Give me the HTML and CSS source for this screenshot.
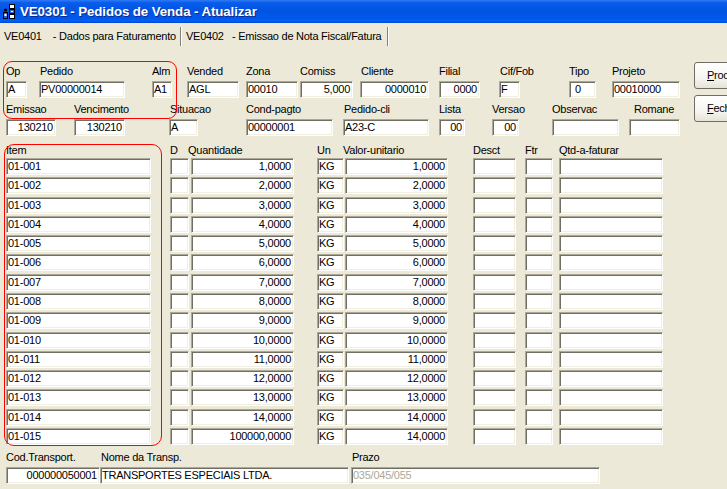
FILE: index.html
```html
<!DOCTYPE html>
<html lang="pt">
<head>
<meta charset="utf-8">
<title>VE0301 - Pedidos de Venda - Atualizar</title>
<link rel="stylesheet" href="styles.css">
</head>
<body>
<div class="window">
  <div class="titlebar">
    <svg class="appicon" width="16" height="16" viewBox="0 0 16 16">
      <circle cx="3.5" cy="6" r="1.6" fill="#000"/>
      <rect x="1.5" y="8.5" width="4" height="6" fill="#2a62e0" stroke="#000" stroke-width="1"/>
      <rect x="2.5" y="10" width="2" height="2" fill="#fff"/>
      <rect x="7.5" y="0.5" width="5" height="4" fill="#fff" stroke="#000" stroke-width="1"/>
      <rect x="7.5" y="5.5" width="5" height="4" fill="#2a62e0" stroke="#000" stroke-width="1"/>
      <rect x="7.5" y="10.5" width="5" height="4" fill="#fff" stroke="#000" stroke-width="1"/>
      <rect x="9" y="7" width="2" height="1" fill="#fff"/>
    </svg>
    <span class="title">VE0301 - Pedidos de Venda - Atualizar</span>
  </div>

  <div class="tabs">
    <div class="tab tab1">VE0401    - Dados para Faturamento</div>
    <div class="tab tab2">VE0402   - Emissao de Nota Fiscal/Fatura</div>
  </div>

  <div class="form">
    <div class="top">
      <div class="top-fields">
        <div class="row">
          <div class="field f-op"><span class="lbl">Op</span><div class="input">A</div></div>
          <div class="field f-pedido"><span class="lbl pl1">Pedido</span><div class="input">PV00000014</div></div>
          <div class="field f-alm"><span class="lbl">Alm</span><div class="input">A1</div></div>
          <div class="field f-vended"><span class="lbl">Vended</span><div class="input">AGL</div></div>
          <div class="field f-zona"><span class="lbl">Zona</span><div class="input">00010</div></div>
          <div class="field f-comiss"><span class="lbl">Comiss</span><div class="input r">5,000</div></div>
          <div class="field f-cliente"><span class="lbl pl1">Cliente</span><div class="input r">0000010</div></div>
          <div class="field f-filial"><span class="lbl">Filial</span><div class="input r">0000</div></div>
          <div class="field f-cif"><span class="lbl pl1">Cif/Fob</span><div class="input">F</div></div>
          <div class="field f-tipo"><span class="lbl">Tipo</span><div class="input ind">0</div></div>
          <div class="field f-projeto"><span class="lbl">Projeto</span><div class="input">00010000</div></div>
        </div>
        <div class="row row2">
          <div class="field f-emissao"><span class="lbl">Emissao</span><div class="input r">130210</div></div>
          <div class="field f-venc"><span class="lbl">Vencimento</span><div class="input r">130210</div></div>
          <div class="field f-sit"><span class="lbl pl1">Situacao</span><div class="input">A</div></div>
          <div class="field f-cond"><span class="lbl">Cond-pagto</span><div class="input">00000001</div></div>
          <div class="field f-pedcli"><span class="lbl pl1">Pedido-cli</span><div class="input">A23-C</div></div>
          <div class="field f-lista"><span class="lbl">Lista</span><div class="input r">00</div></div>
          <div class="field f-versao"><span class="lbl">Versao</span><div class="input r">00</div></div>
          <div class="field f-obs"><span class="lbl">Observac</span><div class="input"></div></div>
          <div class="field f-romane"><span class="lbl pl4">Romane</span><div class="input"></div></div>
        </div>
      </div>
      <div class="buttons">
        <div class="btn"><u>P</u>rocessar</div>
        <div class="btn"><u>F</u>echar</div>
      </div>
    </div>

    <div class="grid">
      <div class="ghead">
        <span class="c-item">Item</span>
        <span class="c-d">D</span>
        <span class="c-qty h-qty">Quantidade</span>
        <span class="c-un">Un</span>
        <span class="c-val h-val">Valor-unitario</span>
        <span class="c-desc">Desct</span>
        <span class="c-ftr">Ftr</span>
        <span class="c-qtd">Qtd-a-faturar</span>
      </div>
      <div class="grows">
        <div class="grow"><div class="input c-item">01-001</div><div class="input c-d"></div><div class="input r c-qty">1,0000</div><div class="input c-un">KG</div><div class="input r c-val">1,0000</div><div class="input c-desc"></div><div class="input c-ftr"></div><div class="input c-qtd"></div></div>
        <div class="grow"><div class="input c-item">01-002</div><div class="input c-d"></div><div class="input r c-qty">2,0000</div><div class="input c-un">KG</div><div class="input r c-val">2,0000</div><div class="input c-desc"></div><div class="input c-ftr"></div><div class="input c-qtd"></div></div>
        <div class="grow"><div class="input c-item">01-003</div><div class="input c-d"></div><div class="input r c-qty">3,0000</div><div class="input c-un">KG</div><div class="input r c-val">3,0000</div><div class="input c-desc"></div><div class="input c-ftr"></div><div class="input c-qtd"></div></div>
        <div class="grow"><div class="input c-item">01-004</div><div class="input c-d"></div><div class="input r c-qty">4,0000</div><div class="input c-un">KG</div><div class="input r c-val">4,0000</div><div class="input c-desc"></div><div class="input c-ftr"></div><div class="input c-qtd"></div></div>
        <div class="grow"><div class="input c-item">01-005</div><div class="input c-d"></div><div class="input r c-qty">5,0000</div><div class="input c-un">KG</div><div class="input r c-val">5,0000</div><div class="input c-desc"></div><div class="input c-ftr"></div><div class="input c-qtd"></div></div>
        <div class="grow"><div class="input c-item">01-006</div><div class="input c-d"></div><div class="input r c-qty">6,0000</div><div class="input c-un">KG</div><div class="input r c-val">6,0000</div><div class="input c-desc"></div><div class="input c-ftr"></div><div class="input c-qtd"></div></div>
        <div class="grow"><div class="input c-item">01-007</div><div class="input c-d"></div><div class="input r c-qty">7,0000</div><div class="input c-un">KG</div><div class="input r c-val">7,0000</div><div class="input c-desc"></div><div class="input c-ftr"></div><div class="input c-qtd"></div></div>
        <div class="grow"><div class="input c-item">01-008</div><div class="input c-d"></div><div class="input r c-qty">8,0000</div><div class="input c-un">KG</div><div class="input r c-val">8,0000</div><div class="input c-desc"></div><div class="input c-ftr"></div><div class="input c-qtd"></div></div>
        <div class="grow"><div class="input c-item">01-009</div><div class="input c-d"></div><div class="input r c-qty">9,0000</div><div class="input c-un">KG</div><div class="input r c-val">9,0000</div><div class="input c-desc"></div><div class="input c-ftr"></div><div class="input c-qtd"></div></div>
        <div class="grow"><div class="input c-item">01-010</div><div class="input c-d"></div><div class="input r c-qty">10,0000</div><div class="input c-un">KG</div><div class="input r c-val">10,0000</div><div class="input c-desc"></div><div class="input c-ftr"></div><div class="input c-qtd"></div></div>
        <div class="grow"><div class="input c-item">01-011</div><div class="input c-d"></div><div class="input r c-qty">11,0000</div><div class="input c-un">KG</div><div class="input r c-val">11,0000</div><div class="input c-desc"></div><div class="input c-ftr"></div><div class="input c-qtd"></div></div>
        <div class="grow"><div class="input c-item">01-012</div><div class="input c-d"></div><div class="input r c-qty">12,0000</div><div class="input c-un">KG</div><div class="input r c-val">12,0000</div><div class="input c-desc"></div><div class="input c-ftr"></div><div class="input c-qtd"></div></div>
        <div class="grow"><div class="input c-item">01-013</div><div class="input c-d"></div><div class="input r c-qty">13,0000</div><div class="input c-un">KG</div><div class="input r c-val">13,0000</div><div class="input c-desc"></div><div class="input c-ftr"></div><div class="input c-qtd"></div></div>
        <div class="grow"><div class="input c-item">01-014</div><div class="input c-d"></div><div class="input r c-qty">14,0000</div><div class="input c-un">KG</div><div class="input r c-val">14,0000</div><div class="input c-desc"></div><div class="input c-ftr"></div><div class="input c-qtd"></div></div>
        <div class="grow"><div class="input c-item">01-015</div><div class="input c-d"></div><div class="input r c-qty">100000,0000</div><div class="input c-un">KG</div><div class="input r c-val">14,0000</div><div class="input c-desc"></div><div class="input c-ftr"></div><div class="input c-qtd"></div></div>
      </div>
    </div>

    <div class="row bottom">
      <div class="field f-cod"><span class="lbl">Cod.Transport.</span><div class="input r">000000050001</div></div>
      <div class="field f-nome"><span class="lbl pl1">Nome da Transp.</span><div class="input">TRANSPORTES ESPECIAIS LTDA.</div></div>
      <div class="field f-prazo"><span class="lbl pl1">Prazo</span><div class="input disabled">035/045/055</div></div>
    </div>
  </div>

  <div class="mark mark1"></div>
  <div class="mark mark2"></div>
</div>
</body>
</html>
```

FILE: styles.css
```css
* { box-sizing: border-box; }

html, body {
  margin: 0;
  padding: 0;
  background: #ECE9D8;
}

body {
  font-family: "Liberation Sans", Arial, sans-serif;
  font-size: 11px;
  letter-spacing: -0.25px;
  color: #000;
}

.window {
  position: relative;
  width: 727px;
  height: 489px;
  overflow: hidden;
  background: #ECE9D8;
}

/* ---------- title bar ---------- */
.titlebar {
  height: 23px;
  display: flex;
  align-items: center;
  padding-left: 2px;
  background: linear-gradient(to bottom, #2F7BF5 0%, #0A5DEA 12%, #0054E3 45%, #0057EA 80%, #0061F5 90%, #0046D2 100%);
}

.appicon {
  display: block;
  flex: none;
  margin-top: 1px;
}

.title {
  margin-left: 2px;
  color: #fff;
  font-weight: bold;
  font-size: 13.3px;
  letter-spacing: -0.1px;
  line-height: 23px;
  text-shadow: 1px 1px 0 #0B2A8C;
  white-space: nowrap;
}

/* ---------- tabs ---------- */
.tabs {
  height: 24px;
  padding-top: 4px;
  display: flex;
  align-items: flex-start;
}

.tab {
  height: 19px;
  line-height: 19px;
  white-space: pre;
  padding-left: 4px;
  border-right: 1px solid #808080;
  box-shadow: 1px 0 0 #fff;
}

.tab1 { width: 181px; }
.tab2 { width: 206px; margin-left: 1px; }

/* ---------- form ---------- */
.form {
  padding-top: 17px;
}

.top {
  display: flex;
  align-items: flex-start;
}

.top-fields {
  width: 680px;
  flex: none;
}

.row {
  display: flex;
  align-items: flex-start;
}

.row2 { margin-top: 4px; }

.field {
  display: flex;
  flex-direction: column;
  flex: none;
}

.lbl {
  display: block;
  height: 14px;
  line-height: 14px;
  margin-bottom: 3px;
  white-space: nowrap;
}

.pl1 { padding-left: 1px; }
.pl4 { padding-left: 5px; }

.input {
  height: 17px;
  line-height: 15px;
  padding: 0 2px 0 1px;
  background: #fff;
  border: 1px solid;
  border-color: #ACA899 #FFFFFF #FFFFFF #ACA899;
  box-shadow: inset 1px 1px 0 #716F64, inset -1px -1px 0 #F1EFE2;
  white-space: nowrap;
  overflow: hidden;
}

.input.r { text-align: right; }
.input.ind { padding-left: 5px; }
.input.disabled { color: #ACA899; }

/* row 1 */
.f-op      { margin-left: 6px;  width: 21px; }
.f-pedido  { margin-left: 12px; width: 86px; }
.f-alm     { margin-left: 27px; width: 20px; }
.f-vended  { margin-left: 15px; width: 52px; }
.f-zona    { margin-left: 7px;  width: 52px; }
.f-comiss  { margin-left: 2px;  width: 53px; }
.f-cliente { margin-left: 7px;  width: 69px; }
.f-filial  { margin-left: 10px; width: 41px; }
.f-cif     { margin-left: 19px; width: 21px; }
.f-tipo    { margin-left: 49px; width: 27px; }
.f-projeto { margin-left: 16px; width: 68px; }

/* row 2 */
.f-emissao { margin-left: 6px;  width: 50px; }
.f-venc    { margin-left: 18px; width: 51px; }
.f-sit     { margin-left: 44px; width: 29px; }
.f-cond    { margin-left: 48px; width: 87px; }
.f-pedcli  { margin-left: 10px; width: 86px; }
.f-lista   { margin-left: 10px; width: 26px; }
.f-versao  { margin-left: 27px; width: 27px; }
.f-obs     { margin-left: 33px; width: 67px; }
.f-romane  { margin-left: 10px; width: 51px; }

/* buttons */
.buttons {
  margin-left: 14px;
  margin-top: -2px;
  display: flex;
  flex-direction: column;
  gap: 6px;
  flex: none;
}

.btn {
  width: 80px;
  height: 27px;
  line-height: 25px;
  padding-left: 12px;
  border: 1px solid #6E6D66;
  border-radius: 3px;
  background: linear-gradient(to bottom, #FFFFFF 0%, #F6F5F0 60%, #E6E3DA 100%);
  white-space: nowrap;
}

/* ---------- grid ---------- */
.grid {
  margin-top: 7px;
}

.ghead {
  display: flex;
  height: 14px;
  line-height: 14px;
  margin-bottom: 1px;
  white-space: nowrap;
}

.ghead span { display: block; flex: none; }

.grows {
  display: flex;
  flex-direction: column;
  gap: 2.2857px;
}

.grow {
  display: flex;
}

.grow .input { flex: none; }

.c-item { margin-left: 6px;  width: 145px; }
.c-d    { margin-left: 19px; width: 19px; }
.c-qty  { margin-left: 2px;  width: 103px; }
.c-un   { margin-left: 23px; width: 27px; }
.c-val  { margin-left: 1px;  width: 103px; }
.c-desc { margin-left: 25px; width: 43px; }
.c-ftr  { margin-left: 9px;  width: 28px; }
.c-qtd  { margin-left: 6px;  width: 104px; }

.h-qty { text-indent: -3px; }
.h-val { text-indent: -2px; }

/* ---------- bottom ---------- */
.bottom { margin-top: 5px; }

.f-cod   { margin-left: 6px; width: 94px; }
.f-nome  { margin-left: 0;   width: 249px; }
.f-prazo { margin-left: 2px; width: 249px; }

/* ---------- red highlight annotations ---------- */
.mark {
  position: absolute;
  border: 1.5px solid #FF0000;
  pointer-events: none;
}

.mark1 {
  left: 3px;
  top: 61px;
  width: 174px;
  height: 58px;
  border-radius: 9px;
}

.mark2 {
  left: 4px;
  top: 144px;
  width: 158px;
  height: 302px;
  border-radius: 10px;
}
```
